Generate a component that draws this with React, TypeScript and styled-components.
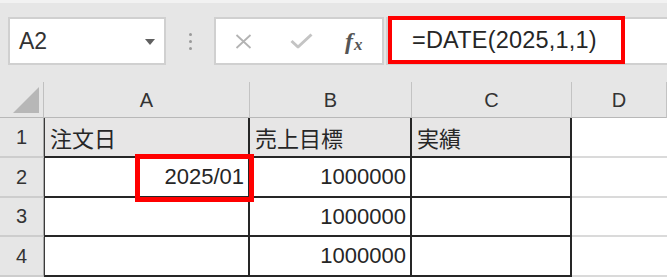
import React from "react";
import styled, { createGlobalStyle, css } from "styled-components";

// ============== Global =============
const GlobalStyle = createGlobalStyle`
  body {
    margin: 0;
    background: #ffffff;
    font-family: "Liberation Sans", "Noto Sans CJK JP", sans-serif;
    color: #262626;
  }
`;

// ============== Style Component =============
const Sheet = styled.div`
  width: 667px;
  height: 277px;
  overflow: hidden;
`;

const Toolbar = styled.div`
  height: 82px;
  box-sizing: border-box;
  border-top: 3px solid #f2f2f2;
  background: #e6e6e6;
  display: flex;
  align-items: flex-start;
  padding: 14px 0 0 8px;
`;

const NameBox = styled.div`
  width: 158px;
  height: 48px;
  box-sizing: border-box;
  background: #fff;
  border: 2px solid #d0d0d0;
  display: flex;
  align-items: center;
  justify-content: space-between;
  padding: 0 9px 0 9px;
  font-size: 23px;
  color: #333;
`;

const Caret = styled.span`
  width: 0;
  height: 0;
  border-left: 5px solid transparent;
  border-right: 5px solid transparent;
  border-top: 6px solid #606060;
  margin-top: 1px;
`;

const Grip = styled.div`
  width: 48px;
  height: 48px;
  display: flex;
  flex-direction: column;
  align-items: center;
  justify-content: center;
  gap: 4px;
  span {
    width: 3px;
    height: 3px;
    border-radius: 50%;
    background: #9a9a9a;
  }
`;

const ButtonBox = styled.div`
  width: 170px;
  height: 48px;
  box-sizing: border-box;
  background: #fff;
  border: 2px solid #d0d0d0;
  display: flex;
  align-items: center;
  padding-left: 19px;
`;

const IconSlot = styled.span<{ $w: number }>`
  width: ${(p) => p.$w}px;
  display: flex;
  align-items: center;
`;

const Fx = styled.span`
  font-family: "Liberation Serif", serif;
  font-style: italic;
  font-weight: bold;
  font-size: 24px;
  color: #555;
  line-height: 1;
  margin-left: -2px;
  sub {
    font-size: 17px;
    vertical-align: -1px;
    margin-left: 1px;
  }
`;

const FormulaInput = styled.div`
  flex: 1;
  height: 48px;
  box-sizing: border-box;
  margin-left: 2px;
  background: #fff;
  border: 2px solid #d0d0d0;
  border-right: none;
  display: flex;
`;

const Highlight = styled.div`
  width: 237px;
  height: 48px;
  box-sizing: border-box;
  margin-top: -3px;
  border: 4px solid #ff0000;
  display: flex;
  align-items: center;
  padding-left: 20px;
  font-size: 23.5px;
  color: #262626;
  letter-spacing: 0.2px;
`;

const Grid = styled.div`
  display: grid;
  grid-template-columns: 44px 206px 162px 160px 1fr;
  grid-template-rows: 36px 40px 40px 39px 40px;
`;

const Corner = styled.div`
  background: #e6e6e6;
  border-right: 1px solid #c0c0c0;
  border-bottom: 1px solid #b8b8b8;
  display: flex;
  align-items: flex-end;
  justify-content: flex-end;
  padding: 0 4px 4px 0;
  box-sizing: border-box;
`;

const SelectAll = styled.span`
  width: 26px;
  height: 26px;
  background: #b7b7b7;
  clip-path: polygon(100% 0, 100% 100%, 0 100%);
`;

const ColHead = styled.div`
  background: #e6e6e6;
  border-right: 1px solid #c3c3c3;
  border-bottom: 1px solid #b8b8b8;
  display: flex;
  align-items: center;
  justify-content: center;
  font-size: 20px;
  color: #333;
  box-sizing: border-box;
  padding-top: 2px;
`;

const RowHead = styled.div`
  background: #e6e6e6;
  border-right: 1px solid #a8a8a8;
  border-bottom: 2px solid #cdcdcd;
  display: flex;
  align-items: center;
  justify-content: center;
  font-size: 20px;
  color: #333;
  box-sizing: border-box;
`;

const Cell = styled.div<{
  $fill?: boolean;
  $right?: boolean;
  $first?: boolean;
  $outside?: boolean;
}>`
  position: relative;
  box-sizing: border-box;
  display: flex;
  align-items: center;
  justify-content: ${(p) => (p.$right ? "flex-end" : "flex-start")};
  padding: 0 4px 0 5px;
  font-size: 22px;
  white-space: nowrap;
  background: ${(p) => (p.$fill ? "#e7e6e6" : "#fff")};
  ${(p) =>
    p.$outside
      ? css`
          border-bottom: 2px solid #dadada;
        `
      : css`
          border-right: 2px solid #262626;
          border-bottom: 2px solid #262626;
        `}
  ${(p) =>
    p.$first &&
    css`
      border-left: 1px solid #3a3a3a;
    `}
`;

const CellMark = styled.div`
  position: absolute;
  z-index: 2;
  left: 90px;
  top: -4px;
  right: -6px;
  bottom: -6px;
  border: 5px solid #ff0000;
  pointer-events: none;
`;

// ============== Data ================
interface IRow {
  no: number;
  a: string;
  b: string;
  c: string;
  header?: boolean;
}

const rows: IRow[] = [
  { no: 1, a: "注文日", b: "売上目標", c: "実績", header: true },
  { no: 2, a: "2025/01", b: "1000000", c: "" },
  { no: 3, a: "", b: "1000000", c: "" },
  { no: 4, a: "", b: "1000000", c: "" },
];

// ========================================

export default function App() {
  return (
    <Sheet>
      <GlobalStyle />
      <Toolbar>
        <NameBox>
          A2
          <Caret />
        </NameBox>
        <Grip>
          <span />
          <span />
          <span />
        </Grip>
        <ButtonBox>
          <IconSlot $w={55}>
            <svg width="17" height="15" viewBox="0 0 17 15">
              <path d="M1.5 1 L15.5 14 M15.5 1 L1.5 14" stroke="#b3b3b3" strokeWidth="1.8" fill="none" />
            </svg>
          </IconSlot>
          <IconSlot $w={57}>
            <svg width="23" height="16" viewBox="0 0 23 16">
              <path d="M1.5 8 L8 14 L21.5 1.5" stroke="#c4c4c4" strokeWidth="3" fill="none" strokeLinejoin="round" />
            </svg>
          </IconSlot>
          <Fx>
            f<sub>x</sub>
          </Fx>
        </ButtonBox>
        <FormulaInput>
          <Highlight>=DATE(2025,1,1)</Highlight>
        </FormulaInput>
      </Toolbar>

      <Grid>
        <Corner>
          <SelectAll />
        </Corner>
        <ColHead>A</ColHead>
        <ColHead>B</ColHead>
        <ColHead>C</ColHead>
        <ColHead>D</ColHead>

        {rows.map((r) => (
          <React.Fragment key={r.no}>
            <RowHead>{r.no}</RowHead>
            <Cell $first $fill={r.header} $right={!r.header}>
              {r.a}
              {r.no === 2 && <CellMark />}
            </Cell>
            <Cell $fill={r.header} $right={!r.header}>
              {r.b}
            </Cell>
            <Cell $fill={r.header}>{r.c}</Cell>
            <Cell $outside />
          </React.Fragment>
        ))}
      </Grid>
    </Sheet>
  );
}
